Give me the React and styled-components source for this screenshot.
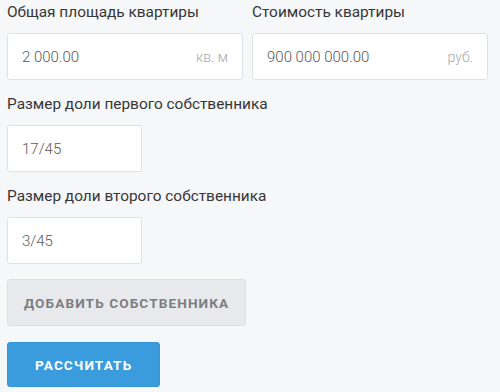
import React from "react";
import styled, { createGlobalStyle } from "styled-components";

const GlobalStyle = createGlobalStyle`
  html, body {
    margin: 0;
    padding: 0;
    background: #f6f7f9;
    font-family: Roboto, "Liberation Sans", sans-serif;
  }
`;

const Form = styled.div`
  display: flex;
  flex-direction: column;
  align-items: flex-start;
  padding: 1px 12px 0 7px;
  width: 481px;
  box-sizing: content-box;
`;

const Row = styled.div`
  display: grid;
  grid-template-columns: 236px 236px;
  column-gap: 9px;
  width: 100%;
`;

const Field = styled.div`
  display: flex;
  flex-direction: column;
  margin-bottom: 13px;
`;

const Label = styled.label`
  font-size: 15.4px;
  line-height: 22px;
  color: #363636;
  margin-bottom: 10px;
`;

const InputBox = styled.div`
  display: flex;
  align-items: center;
  justify-content: space-between;
  box-sizing: border-box;
  width: ${(p) => p.$width || "100%"};
  height: 47px;
  padding: 0 14px 0 14px;
  background: #fff;
  border: 1px solid #dfe1e4;
  border-radius: 3px;
`;

const Value = styled.span`
  font-size: 15px;
  color: #595959;
  font-weight: 300;
`;

const Unit = styled.span`
  font-size: 14px;
  color: #a5a8ad;
  font-weight: 300;
`;

const Button = styled.button`
  box-sizing: border-box;
  height: ${(p) => p.$height || "47px"};
  padding: 0 ${(p) => p.$padX || "14px"};
  border-radius: 3px;
  font-family: Roboto, "Liberation Sans", sans-serif;
  font-weight: 700;
  font-size: 13.6px;
  letter-spacing: 1.1px;
  text-transform: uppercase;
  cursor: pointer;
  border: 1px solid ${(p) => (p.$primary ? "#3396d6" : "#dcdee2")};
  background: ${(p) => (p.$primary ? "#3a9cdc" : "#e8e9ec")};
  color: ${(p) => (p.$primary ? "#fff" : "#7b7e83")};
  margin-top: ${(p) => p.$mt || "0"};
`;

export default function App() {
  return (
    <>
      <GlobalStyle />
      <Form>
        <Row>
          <Field>
            <Label>Общая площадь квартиры</Label>
            <InputBox>
              <Value>2 000.00</Value>
              <Unit>кв. м</Unit>
            </InputBox>
          </Field>
          <Field>
            <Label>Стоимость квартиры</Label>
            <InputBox>
              <Value>900 000 000.00</Value>
              <Unit>руб.</Unit>
            </InputBox>
          </Field>
        </Row>
        <Field>
          <Label>Размер доли первого собственника</Label>
          <InputBox $width="135px">
            <Value>17/45</Value>
          </InputBox>
        </Field>
        <Field>
          <Label>Размер доли второго собственника</Label>
          <InputBox $width="135px">
            <Value>3/45</Value>
          </InputBox>
        </Field>
        <Button $mt="2px" $padX="16px">Добавить собственника</Button>
        <Button $primary $mt="16px" $height="45px" $padX="27px">
          Рассчитать
        </Button>
      </Form>
    </>
  );
}
